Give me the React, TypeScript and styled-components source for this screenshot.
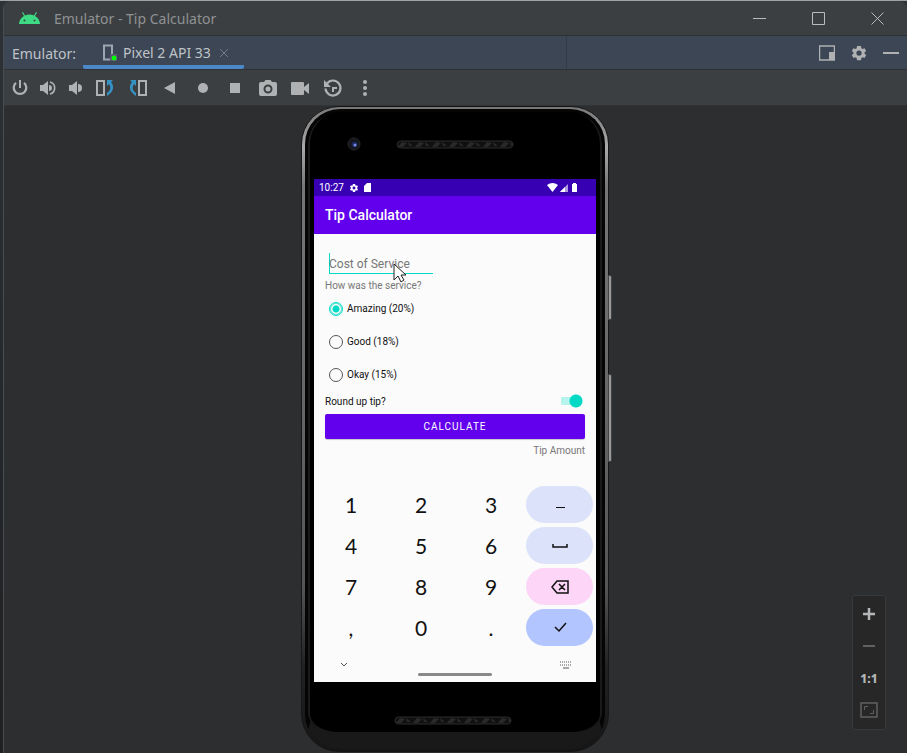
import React, { useState } from "react";
import styled, { createGlobalStyle, css } from "styled-components";

const GlobalStyle = createGlobalStyle`
  * { box-sizing: border-box; }
  html, body, #root { height: 100%; }
  body { margin: 0; background: #1e1f21; overflow: hidden; font-family: "Noto Sans", "Open Sans", sans-serif; }
  button { font: inherit; color: inherit; background: none; border: 0; padding: 0; margin: 0; display: grid; place-items: center; }
  svg { display: block; }
`;

const Backdrop = styled.div`
  min-height: 100vh;
  padding-left: 3px;
  background: linear-gradient(#2c3236, #1f2022);
  border-top: 1px solid #a0a2a3;
  display: flex;
`;
const Window = styled.main`
  flex: 1;
  min-width: 0;
  height: calc(100vh - 1px);
  display: flex;
  flex-direction: column;
  border-left: 1px solid #4a4d50;
  border-radius: 8px 8px 0 0;
  background: #2d2e30;
  overflow: hidden;
`;
const TitleBar = styled.header`
  height: 35px;
  flex: none;
  display: flex;
  align-items: center;
  padding-left: 15px;
  gap: 14px;
  background: #3c3f41;
  border-bottom: 1px solid #2e3133;
  color: #8f9294;
`;
const WindowTitle = styled.h1`
  flex: 1;
  margin: 0;
  font-size: 14px;
  font-weight: 400;
`;
const WindowButton = styled.button`
  width: 59px;
  height: 34px;
  color: #b9bbbc;
`;
const WindowButtons = styled.div`
  display: flex;
`;
const TabBar = styled.nav`
  height: 34px;
  flex: none;
  display: flex;
  align-items: stretch;
  padding-left: 8px;
  background: linear-gradient(#323b48, #323b48) 562px 0 / 1px 100% no-repeat, #3c4655;
  border-bottom: 1px solid #2e3236;
  color: #bfc3c7;
  font-size: 14px;
`;
const TabBarLabel = styled.span`
  width: 71px;
  line-height: 35px;
`;
const Tab = styled.div`
  width: 161px;
  display: flex;
  align-items: center;
  padding: 4px 12px 0 18px;
  border-bottom: 4px solid #4a88c7;
  border-radius: 0 0 2px 2px;
  gap: 4px;
`;
const TabName = styled.button`
  white-space: nowrap;
`;
const TabClose = styled.button`
  margin-left: 4px;
  color: #747b84;
`;
const TabTools = styled.div`
  margin-left: auto;
  display: flex;
  align-items: center;
  gap: 8px;
  padding-right: 4px;
  color: #afb1b3;
`;
const ToolButton = styled.button`
  width: 24px;
  height: 24px;
`;
const Toolbar = styled.div`
  height: 36px;
  flex: none;
  display: flex;
  align-items: center;
  padding: 0 4px;
  gap: 5px;
  color: #afb1b3;
  background: #3c3f41;
  border-bottom: 1px solid #323335;
`;
const ToolGroup = styled.div<{ $width: number }>`
  display: flex;
  justify-content: space-between;
  width: ${(p) => p.$width}px;
`;
const Workspace = styled.section`
  position: relative;
  flex: 1;
  min-height: 0;
  display: flex;
  justify-content: center;
  align-items: flex-start;
  padding-right: 1px;
`;

const Phone = styled.div`
  position: relative;
  width: 308px;
  padding: 2px 3px;
  border: 1px solid #161616;
  border-radius: 38px;
  background: linear-gradient(#777 0, #aaa 40px, #777 80px, #666 300px, #555 480px, #222 560px, #161616 100%);
`;
const PhoneBody = styled.div`
  border-radius: 35px;
  padding: 0 6px;
  border: 3px solid #050505;
  border-bottom: 17px solid #191919;
  background: #000;
  box-shadow: inset 3px 0 0 -1px #1a1a1a, inset -3px 0 0 -1px #1a1a1a;
`;
const SideButton = styled.span<{ $top: number; $height: number }>`
  position: absolute;
  right: -4px;
  top: ${(p) => p.$top}px;
  height: ${(p) => p.$height}px;
  width: 4px;
  border: 1px solid #444;
  border-radius: 0 2px 2px 0;
  background: #999;
`;
const TopBezel = styled.div`
  height: 67px;
  padding: 0 0 3px 33px;
  display: flex;
  gap: 35px;
  align-items: center;
`;
const BottomBezel = styled.div`
  height: 50px;
  padding: 34px 0 0 80px;
`;
const Screen = styled.div`
  background: #fbfbfb;
  font-family: Roboto, sans-serif;
  color: #111;
`;
const StatusBar = styled.div`
  height: 17px;
  display: flex;
  align-items: center;
  gap: 5px;
  padding: 0 18px 0 5px;
  background: #3700b3;
  color: #fff;
  font-size: 10px;
`;
const StatusIcons = styled.div`
  margin-left: auto;
  display: flex;
  gap: 1px;
`;
const AppBar = styled.header`
  height: 38px;
  padding-left: 11px;
  line-height: 38px;
  background: #6200ee;
  color: #fff;
`;
const AppTitle = styled.h2`
  margin: 0;
  font-size: 14px;
  font-weight: 500;
`;
const Form = styled.form`
  padding: 19px 11px 0;
  font-size: 10px;
`;
const CostField = styled.div`
  position: relative;
  width: 104px;
  margin-left: 4px;
`;
const CostInput = styled.input`
  display: block;
  width: 100%;
  height: 21px;
  padding: 1px 0 0;
  border: 0;
  border-bottom: 1px solid #03dac5;
  box-shadow: inset 1px 0 0 #03dac5;
  outline: 0;
  background: none;
  font: 12px/19px Roboto, sans-serif;
  color: #222;
  &::placeholder { color: #777; opacity: 1; }
`;
const Pointer = styled.svg`
  position: absolute;
  left: 64px;
  top: 10px;
`;
const Question = styled.p`
  margin: 6px 0 0;
  line-height: 12px;
  color: #777;
`;
const Options = styled.div`
  display: flex;
  flex-direction: column;
  padding-left: 4px;
`;
const Option = styled.label`
  height: 33px;
  display: flex;
  align-items: center;
  gap: 4px;
`;
const Radio = styled.input`
  appearance: none;
  width: 14px;
  height: 14px;
  margin: 0;
  border: 1px solid #555;
  border-radius: 50%;
  &:checked {
    border: 1px solid #03dac5;
    box-shadow: inset 0 0 0 1px #03dac5aa;
    background: radial-gradient(circle, #03dac5 3px, transparent 4px);
  }
`;
const RoundUp = styled.label`
  display: flex;
  align-items: center;
  justify-content: space-between;
  height: 20px;
`;
const Switch = styled.input`
  appearance: none;
  width: 22px;
  height: 14px;
  margin: 0 2px 0 0;
  background: radial-gradient(circle at 15px 7px, #03dac5 6px, transparent 7px),
    linear-gradient(#b5f3ed, #b5f3ed) 0 3px / 16px 8px no-repeat;
  border-radius: 5px 7px 7px 5px;
`;
const Calculate = styled.button.attrs({ type: "button" })`
  && {
    width: 100%;
    height: 25px;
    margin-top: 3px;
    border-radius: 2px;
    background: #6200ee;
    color: #fff;
    font-size: 10px;
    letter-spacing: 1px;
    box-shadow: 0 1px 1px #0003;
  }
`;
const Result = styled.output`
  display: block;
  margin-top: 5px;
  line-height: 13px;
  text-align: right;
  color: #777;
`;
const Keypad = styled.div`
  display: grid;
  grid-template-columns: repeat(3, 70px) 67px;
  grid-auto-rows: 37px;
  row-gap: 4px;
  margin-top: 29px;
  padding-left: 2px;
  font-family: Lato, Roboto, sans-serif;
  font-size: 21px;
`;
const Key = styled.button<{ $fill?: string }>`
  && {
    border-radius: 19px;
    ${(p) => p.$fill && css`background: ${p.$fill};`}
  }
`;
const NavBar = styled.footer`
  display: grid;
  grid-template-columns: 60px 1fr 60px;
  align-items: center;
  justify-items: center;
  height: 36px;
  padding-top: 2px;
  color: #555;
`;
const HomeHandle = styled.span`
  width: 74px;
  height: 3px;
  margin-top: 18px;
  border-radius: 2px;
  background: #888;
`;
const ZoomPanel = styled.aside`
  position: absolute;
  right: 21px;
  bottom: 23px;
  width: 34px;
  padding: 2px 0 3px;
  display: flex;
  flex-direction: column;
  background: #272727;
  border: 1px solid #38393b;
  border-radius: 3px;
`;
const ZoomButton = styled.button<{ $dim?: boolean }>`
  && {
    height: 32px;
    color: ${(p) => (p.$dim ? "#606162" : "#b4b6b7")};
    font-size: 12px;
    font-weight: 800;
  }
`;

const gear =
  "M19.4 13c.1-.7.1-1.3 0-2l2.2-1.7-2.2-3.8-2.6 1a8 8 0 0 0-1.7-1l-.4-3H9.3l-.4 3a8 8 0 0 0-1.7 1l-2.6-1-2.2 3.8L4.6 11a8 8 0 0 0 0 2l-2.2 1.7 2.2 3.8 2.6-1a8 8 0 0 0 1.7 1l.4 3h5.4l.4-3a8 8 0 0 0 1.7-1l2.6 1 2.2-3.8zM12 15.5a3.5 3.5 0 1 1 0-7 3.5 3.5 0 0 1 0 7z";

const Gear = ({ size }: { size: number }) => (
  <svg width={size} height={size} viewBox="0 0 24 24"><path d={gear} fill="currentColor" /></svg>
);

const Icon = ({ children }: { children: React.ReactNode }) => (
  <svg width="20" height="20" viewBox="0 0 20 20" fill="currentColor">{children}</svg>
);

const line = { fill: "none", stroke: "currentColor" };

interface Tool {
  name: string;
  art: React.ReactNode;
}

const hardwareTools: Tool[] = [
  { name: "Power", art: <><path d="M6 4.8a6.3 6.3 0 1 0 8 0" {...line} strokeWidth="2.3" /><path d="M9 2h2v8H9z" /></> },
  { name: "Volume up", art: <><path d="M2 7h3l5-4v14l-5-4H2z" /><path d="M11 7a3 3 0 0 1 0 6z" /><path d="M12 4a6.2 6.2 0 0 1 0 12" {...line} strokeWidth="1.7" /></> },
  { name: "Volume down", art: <><path d="M3 7h3l5-4v14l-5-4H3z" /><path d="M12 6a4 4 0 0 1 0 8z" /></> },
];

const deviceTools: Tool[] = [
  { name: "Rotate left", art: <><path d="M2 3h7v14H2z" {...line} strokeWidth="2" /><path d="M12 2h6l-2 2c4 5 2 10-4 14v-3c4-3 4-6 2-9l-2 2z" fill="#3592c4" /></> },
  { name: "Rotate right", art: <><path d="M11 3h7v14h-7z" {...line} strokeWidth="2" /><path d="M8 2H2l2 2c-4 5-2 10 4 14v-3c-4-3-4-6-2-9l2 2z" fill="#3592c4" /></> },
  { name: "Back", art: <path d="M4 10l11-6v12z" /> },
  { name: "Home", art: <circle cx="10" cy="10" r="5" /> },
  { name: "Overview", art: <path d="M5 5h10v10H5z" /> },
  { name: "Take screenshot", art: <><path fillRule="evenodd" d="M3 4h3l1.5-2h5L14 4h3q2 0 2 2v10q0 2-2 2H3q-2 0-2-2V6q0-2 2-2zm7 2.5a4.5 4.5 0 1 0 0 9 4.5 4.5 0 0 0 0-9z" /><circle cx="10" cy="11" r="2.5" /></> },
  { name: "Record screen", art: <path d="M2 4h11q1 0 1 1v4l5-4v11l-5-4v4q0 1-1 1H2q-1 0-1-1V5q0-1 1-1z" /> },
  { name: "Snapshots", art: <><path d="M4 5.5a7.5 7.5 0 1 1-1.5 5" {...line} strokeWidth="2.2" /><path d="M1 2v7h7z" /><path d="M9 14V9h5v2h-3v3z" /></> },
  { name: "More", art: <><circle cx="10" cy="4" r="2" /><circle cx="10" cy="10" r="2" /><circle cx="10" cy="16" r="2" /></> },
];

const Speaker = () => (
  <svg width="118" height="9" viewBox="0 0 118 9">
    <defs>
      <pattern id="mesh" width="17" height="8" patternUnits="userSpaceOnUse">
        <path d="M0 0h17v8H0z" fill="#101010" />
        <path d="M2 7l4-5 5 1-4 4zM12 2l5 4h-4z" fill="#292929" />
      </pattern>
    </defs>
    <rect x="1" y="1" width="116" height="7" rx="3.5" fill="url(#mesh)" stroke="#2c2c2c" />
  </svg>
);

const Camera = () => (
  <svg width="14" height="14" viewBox="0 0 14 14">
    <circle cx="7" cy="7" r="6" fill="#15161a" stroke="#292929" />
    <circle cx="7.5" cy="7.5" r="3" fill="#18265a" />
    <circle cx="8" cy="8" r="1.5" fill="#788cdf" />
  </svg>
);

const keys: { label: string; fill?: string; art?: React.ReactNode }[] = [
  { label: "1" }, { label: "2" }, { label: "3" }, { label: "–", fill: "#dce2f9", art: <path d="M6 12.5h9" {...line} /> },
  { label: "4" }, { label: "5" }, { label: "6" }, { label: "Space", fill: "#dce2f9", art: <path d="M3 8v3h14V8" {...line} strokeWidth="1.5" /> },
  { label: "7" }, { label: "8" }, { label: "9" },
  { label: "Delete", fill: "#fcd5f7", art: <path d="M7 4h11v12H7l-5-6zM9 7l6 6m0-6l-6 6" {...line} strokeWidth="1.5" /> },
  { label: "," }, { label: "0" }, { label: "." },
  { label: "Done", fill: "#b3c5ff", art: <path d="M5 9l4 4 7-8" {...line} strokeWidth="1.5" /> },
];

const ratings = ["Amazing (20%)", "Good (18%)", "Okay (15%)"];

const renderTool = (t: Tool) => (
  <ToolButton key={t.name} aria-label={t.name}><Icon>{t.art}</Icon></ToolButton>
);

export default function App() {
  const [rating, setRating] = useState(ratings[0]);
  const [cost, setCost] = useState("");
  return (
    <Backdrop>
      <GlobalStyle />
      <Window>
        <TitleBar>
          <svg width="21" height="14" viewBox="0 0 21 14">
            <path d="M0 13a10.5 10.5 0 0 1 5-8L3 1.5l1-.5 2 3.5a12 12 0 0 1 9 0L17 1l1 .5L16 5a10.5 10.5 0 0 1 5 8z" fill="#3ddc84" />
            <circle cx="5.5" cy="9.5" r="1" fill="#3c3f41" /><circle cx="15.5" cy="9.5" r="1" fill="#3c3f41" />
          </svg>
          <WindowTitle>Emulator - Tip Calculator</WindowTitle>
          <WindowButtons>
            <WindowButton aria-label="Minimize"><svg width="13" height="13"><path d="M0 6.5h13" {...line} /></svg></WindowButton>
            <WindowButton aria-label="Maximize"><svg width="13" height="13"><path d="M.5.5h12v12H.5z" {...line} /></svg></WindowButton>
            <WindowButton aria-label="Close"><svg width="13" height="13"><path d="M.5.5l12 12m0-12l-12 12" {...line} /></svg></WindowButton>
          </WindowButtons>
        </TitleBar>
        <TabBar>
          <TabBarLabel>Emulator:</TabBarLabel>
          <Tab>
            <svg width="18" height="18" viewBox="0 0 18 18">
              <path d="M3 1.5h8v14H3z" fill="none" stroke="#9aa7b0" strokeWidth="2" />
              <path d="M9 10h7v7H9z" fill="#61517c" /><circle cx="13" cy="14" r="2.5" fill="#0f0" />
            </svg>
            <TabName>Pixel 2 API 33</TabName>
            <TabClose aria-label="Close tab"><svg width="10" height="10"><path d="M1 1l8 8m0-8L1 9" {...line} /></svg></TabClose>
          </Tab>
          <TabTools>
            <ToolButton aria-label="Layout"><svg width="16" height="16"><path d="M.5 1h15v14H.5z" {...line} strokeWidth="1.5" /><path d="M10 7h5v8h-5z" fill="currentColor" /></svg></ToolButton>
            <ToolButton aria-label="Settings"><Gear size={18} /></ToolButton>
            <ToolButton aria-label="Hide"><svg width="16" height="16"><path d="M0 8h16" {...line} strokeWidth="2" /></svg></ToolButton>
          </TabTools>
        </TabBar>
        <Toolbar>
          <ToolGroup $width={80}>{hardwareTools.map(renderTool)}</ToolGroup>
          <ToolGroup $width={284}>{deviceTools.map(renderTool)}</ToolGroup>
        </Toolbar>
        <Workspace>
          <Phone>
            <SideButton $top={168} $height={45} />
            <SideButton $top={267} $height={88} />
            <PhoneBody>
              <TopBezel><Camera /><Speaker /></TopBezel>
              <Screen>
                <StatusBar>
                  <span>10:27</span><Gear size={10} />
                  <svg width="7" height="9"><path d="M3 0h4v9H0V3z" fill="#fff" /></svg>
                  <StatusIcons>
                    <svg width="11" height="9"><path d="M0 2q5.5-4 11 0L5.5 9z" fill="#fff" /></svg>
                    <svg width="11" height="9"><path d="M1 9l8-8v8z" fill="#fff9" /><path d="M1 9l5-5v5z" fill="#fff" /></svg>
                    <svg width="7" height="9"><path d="M1 1h1V0h3v1h1v8H1z" fill="#fff" /></svg>
                  </StatusIcons>
                </StatusBar>
                <AppBar><AppTitle>Tip Calculator</AppTitle></AppBar>
                <Form>
                  <CostField>
                    <CostInput aria-label="Cost of Service" placeholder="Cost of Service" value={cost} onChange={(e) => setCost(e.target.value)} />
                    <Pointer width="14" height="20" viewBox="0 0 14 20"><path d="M1 1v16l4-4 3 6 3-2-3-5h5z" fill="#fff" stroke="#222" /></Pointer>
                  </CostField>
                  <Question>How was the service?</Question>
                  <Options role="radiogroup" aria-label="How was the service?">
                    {ratings.map((r) => (
                      <Option key={r}><Radio type="radio" name="rating" checked={rating === r} onChange={() => setRating(r)} />{r}</Option>
                    ))}
                  </Options>
                  <RoundUp>Round up tip?<Switch type="checkbox" role="switch" defaultChecked /></RoundUp>
                  <Calculate>CALCULATE</Calculate>
                  <Result>Tip Amount</Result>
                </Form>
                <Keypad>
                  {keys.map((k) => (
                    <Key key={k.label} $fill={k.fill} aria-label={k.label}>{k.art ? <Icon>{k.art}</Icon> : k.label}</Key>
                  ))}
                </Keypad>
                <NavBar>
                  <svg width="8" height="6"><path d="M1 1l3 3 3-3" {...line} /></svg>
                  <HomeHandle />
                  <svg width="12" height="8"><path d="M0 1h12M0 4h12" {...line} strokeDasharray="1 1" /><path d="M3 7h6" {...line} /></svg>
                </NavBar>
              </Screen>
              <BottomBezel><Speaker /></BottomBezel>
            </PhoneBody>
          </Phone>
          <ZoomPanel>
            <ZoomButton aria-label="Zoom in"><svg width="14" height="14"><path d="M7 1v12M1 7h12" {...line} strokeWidth="2.5" /></svg></ZoomButton>
            <ZoomButton $dim aria-label="Zoom out"><svg width="14" height="14"><path d="M1 7h12" {...line} strokeWidth="2" /></svg></ZoomButton>
            <ZoomButton>1:1</ZoomButton>
            <ZoomButton $dim aria-label="Fit to window"><svg width="18" height="16"><path d="M1 1h16v14H1z" {...line} strokeWidth="1.5" /><path d="M4.5 8V4.5H8M10 11.5h3.5V8" {...line} /></svg></ZoomButton>
          </ZoomPanel>
        </Workspace>
      </Window>
    </Backdrop>
  );
}
